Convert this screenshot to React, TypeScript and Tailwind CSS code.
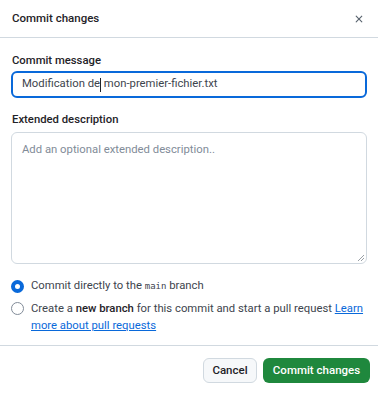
export default function App() {
  return (
    <div
      className="w-[378px] h-[394px] bg-white text-[#1f2328] overflow-hidden"
      style={{ fontFamily: 'Roboto, "Noto Sans", sans-serif' }}
    >
      {/* Header */}
      <div className="flex items-center justify-between h-[38px] pl-3 pr-[9px] border-b border-[#d1d9e0]">
        <h1 className="text-[11.5px] font-medium">Commit changes</h1>
        <button className="w-5 h-5 flex items-center justify-center text-[#59636e]">
          <svg width="12" height="12" viewBox="0 0 16 16" fill="currentColor">
            <path d="M3.72 3.72a.75.75 0 0 1 1.06 0L8 6.94l3.22-3.22a.749.749 0 0 1 1.275.326.749.749 0 0 1-.215.734L9.06 8l3.22 3.22a.749.749 0 0 1-.326 1.275.749.749 0 0 1-.734-.215L8 9.06l-3.22 3.22a.751.751 0 0 1-1.042-.018.751.751 0 0 1-.018-1.042L6.94 8 3.72 4.78a.75.75 0 0 1 0-1.06Z" />
          </svg>
        </button>
      </div>

      <div className="px-[11px] pt-[14px]">
        {/* Commit message */}
        <label className="block text-[11.3px] font-medium leading-[18px] mb-[1px] pl-[1px]">
          Commit message
        </label>
        <div className="h-[27px] rounded-md border-2 border-[#0969da] flex items-center pl-[9px] text-[11.3px] text-[#3d444d] whitespace-pre">
          <span>Modification de</span>
          <span className="w-px h-[14px] bg-[#1f2328]" />
          <span> mon-premier-fichier.txt</span>
        </div>

        {/* Extended description */}
        <label className="block text-[11.3px] font-medium leading-[18px] mt-[13px] mb-[3px] pl-[1px]">
          Extended description
        </label>
        <div className="relative h-[132px] rounded-md border border-[#d1d9e0] px-[10px] pt-[9px] text-[11.3px] text-[#818b98]">
          Add an optional extended description..
          <svg
            className="absolute right-[1px] bottom-[1px]"
            width="8"
            height="8"
            viewBox="0 0 8 8"
            stroke="#9aa0a6"
            strokeWidth="1"
          >
            <path d="M7 1 L1 7 M7 4 L4 7" />
          </svg>
        </div>

        {/* Radios */}
        <div className="mt-[13px] flex flex-col gap-[5px] text-[11.3px] text-[#3d444d]">
          <div className="flex items-center gap-[7px]">
            <span className="w-[13px] h-[13px] rounded-full border-[4px] border-[#0969da] bg-white shrink-0" />
            <p className="leading-[18px]">
              Commit directly to the{" "}
              <code
                className="text-[9px]"
                style={{ fontFamily: '"DejaVu Sans Mono", monospace' }}
              >
                main
              </code>{" "}
              branch
            </p>
          </div>
          <div className="flex items-start gap-[7px]">
            <span className="mt-[2px] w-[13px] h-[13px] rounded-full border border-[#818b98] bg-white shrink-0" />
            <p className="leading-[17px]">
              Create a <b className="font-medium text-[#1f2328]">new branch</b> for this commit and start a pull request{" "}
              <a className="text-[#0969da] underline">Learn more about pull requests</a>
            </p>
          </div>
        </div>
      </div>

      {/* Footer */}
      <div className="mt-[11px] border-t border-[#d1d9e0] flex justify-end gap-[6px] px-[8px] pt-[12px]">
        <button className="h-[25px] w-[54px] rounded-md border border-[#d1d9e0] bg-[#f6f8fa] text-[11.5px] font-medium">
          Cancel
        </button>
        <button className="h-[25px] w-[107px] rounded-md bg-[#1f883d] text-white text-[11.5px] font-medium">
          Commit changes
        </button>
      </div>
    </div>
  );
}
